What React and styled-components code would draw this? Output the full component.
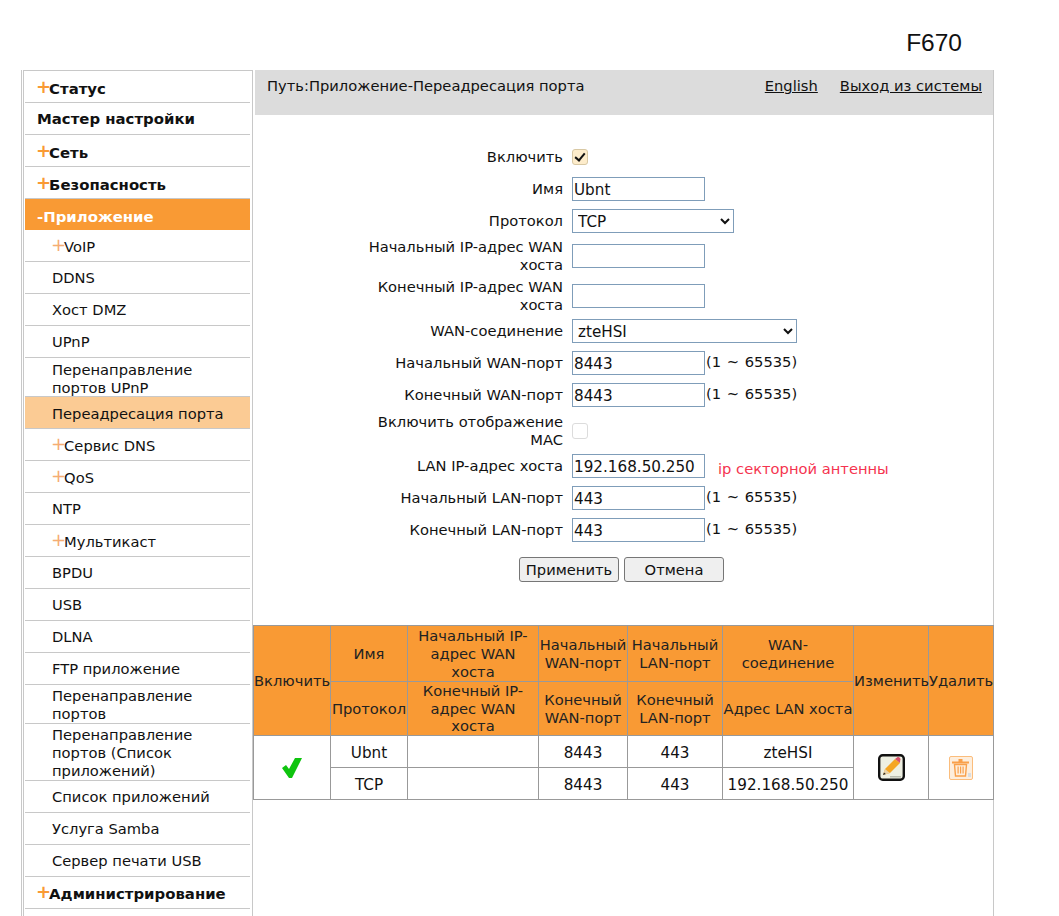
import styled, { createGlobalStyle } from 'styled-components';

const Global = createGlobalStyle`
	html, body {
		margin: 0;
		padding: 0;
		background: #fff;
	}
	body {
		font-family: 'DejaVu Sans', Verdana, sans-serif;
		font-size: 14.7px;
		line-height: 18px;
		color: #111;
	}
`;

const Page = styled.div`
	display: flex;
	flex-direction: column;
	height: 916px;
	overflow: hidden;
`;

const Header = styled.div`
	flex: none;
	height: 70px;
	width: 962px;
	box-sizing: border-box;
	padding-top: 29px;
	text-align: right;
	font-family: 'Liberation Sans', Arial, sans-serif;
	font-size: 24.5px;
	line-height: 28px;
`;

const Frame = styled.div`
	flex: 1;
	display: flex;
	width: 971px;
	margin-left: 21px;
	border-left: 1px solid #c8c8c8;
	border-right: 1px solid #c8c8c8;
`;

const Sidebar = styled.div`
	flex: none;
	width: 225px;
	margin-left: 1px;
	padding: 0 2px 0 1px;
	border: 1px solid #c8c8c8;
	border-bottom: none;
`;

const navTop = p => {
	if (p.$top) return p.$top;
	if (p.$main) return p.$plus || p.$active ? 9 : 7;
	return p.$plus || p.$current ? 8 : 7;
};

const NavItem = styled.div`
	box-sizing: border-box;
	height: ${p => (p.$height ? p.$height : p.$active ? 31 : 32)}px;
	padding: ${navTop}px 0 0 ${p => (p.$sub ? '27px' : '12px')};
	border-bottom: ${p => (p.$active ? 'none' : '1px solid #c8c8c8')};
	font-weight: ${p => (p.$main ? 700 : 400)};
	font-size: ${p => (p.$main ? '14.9px' : 'inherit')};
	background: ${p => (p.$active ? '#f99a34' : p.$current ? '#fbcb94' : 'transparent')};
	color: ${p => (p.$active ? '#fff' : '#111')};
`;

const Plus = styled.span`
	display: inline-block;
	margin: 0 -2px 0 -1px;
	font-size: 18px;
	line-height: 0;
	vertical-align: 1px;
	color: ${p => (p.$sub ? '#f5ad73' : '#f99a34')};
	font-weight: ${p => (p.$sub ? 400 : 700)};
`;

const Main = styled.div`
	flex: 1;
	min-width: 0;
`;

const PathBar = styled.div`
	display: flex;
	justify-content: space-between;
	height: 45px;
	box-sizing: border-box;
	margin-left: 2px;
	padding: 7px 11px 0 12px;
	background: #dcdcdc;
`;

const Links = styled.div`
	display: flex;
	gap: 22px;
`;

const TopLink = styled.a`
	color: #111;
	text-decoration: underline;
`;

const Form = styled.div`
	display: flex;
	flex-direction: column;
	padding: 30px 0 43px;
`;

const Row = styled.div`
	display: flex;
	align-items: center;
	min-height: 24px;
	margin-top: ${p => p.$gap ?? 8}px;
`;

const Label = styled.div`
	flex: none;
	box-sizing: border-box;
	width: 310px;
	padding-left: 100px;
	text-align: right;
`;

const Control = styled.div`
	display: flex;
	align-items: center;
	margin-left: 9px;
`;

const TextInput = styled.input`
	box-sizing: border-box;
	width: 133px;
	height: 24px;
	padding: 2px 1px 0;
	border: 1px solid #7f9db9;
	border-radius: 0;
	background: #fff;
	color: #111;
	font: inherit;
	font-size: 15.2px;
	outline: none;
`;

const Select = styled.select`
	box-sizing: border-box;
	width: ${p => p.$width}px;
	height: 24px;
	padding: 2px 0 0 1px;
	border: 1px solid #7f9db9;
	border-radius: 0;
	background: #fff;
	color: #111;
	font: inherit;
	font-size: 15.2px;
`;

const Check = styled.input`
	appearance: none;
	position: relative;
	width: 16px;
	height: 16px;
	margin: 0;
	border: 1px solid ${p => (p.checked ? '#d8c8a4' : '#dcdcdc')};
	border-radius: 3px;
	background: ${p => (p.checked ? '#fdeccb' : '#fff')};

	&:checked::after {
		content: '';
		position: absolute;
		left: 4px;
		top: 1px;
		width: 4px;
		height: 8px;
		border: solid #111;
		border-width: 0 2px 2px 0;
		transform: rotate(40deg);
	}
`;

const Range = styled.span`
	margin-left: 1px;
	margin-top: -3px;
	word-spacing: 1px;
`;

const Note = styled.span`
	margin-left: 13px;
	margin-top: 7px;
	color: #f5344f;
`;

const Buttons = styled.div`
	display: flex;
	justify-content: center;
	gap: 5px;
	margin-top: 15px;
	margin-left: 266px;
	width: 205px;
`;

const Button = styled.button`
	box-sizing: border-box;
	width: 100px;
	height: 25px;
	padding: 0;
	border: 1px solid #767676;
	border-radius: 3px;
	background: #efefef;
	color: #111;
	font: inherit;
`;

const Table = styled.table`
	width: 740px;
	border-collapse: collapse;
	table-layout: fixed;
	text-align: center;
`;

const Th = styled.th`
	height: ${p => p.$height ?? 'auto'};
	padding: ${p => (p.$first ? 1 : 0)}px ${p => p.$pad ?? 0}px 0;
	border: 1px solid #999;
	background: #f99a34;
	font-weight: 400;
	line-height: ${p => (p.$first ? '18px' : '17.7px')};
	color: #222;
	white-space: ${p => (p.$nowrap ? 'nowrap' : 'normal')};
`;

const Td = styled.td`
	height: 29px;
	padding: 2px 0 0;
	border: 1px solid #999;
	background: #fff;
	font-size: 15.2px;
`;

const IconWrap = styled.div`
	display: flex;
	justify-content: center;
	align-items: center;
	margin-top: -2px;
`;

const items = [
	{ text: 'Статус', main: true, plus: true },
	{ text: 'Мастер настройки', main: true },
	{ text: 'Сеть', main: true, plus: true },
	{ text: 'Безопасность', main: true, plus: true },
	{ text: 'Приложение', main: true, active: true },
	{ text: 'VoIP', sub: true, plus: true },
	{ text: 'DDNS', sub: true },
	{ text: 'Хост DMZ', sub: true },
	{ text: 'UPnP', sub: true },
	{ text: 'Перенаправление портов UPnP', sub: true, top: 3, height: 39 },
	{ text: 'Переадресация порта', sub: true, current: true },
	{ text: 'Сервис DNS', sub: true, plus: true },
	{ text: 'QoS', sub: true, plus: true },
	{ text: 'NTP', sub: true },
	{ text: 'Мультикаст', sub: true, plus: true },
	{ text: 'BPDU', sub: true },
	{ text: 'USB', sub: true },
	{ text: 'DLNA', sub: true },
	{ text: 'FTP приложение', sub: true },
	{ text: 'Перенаправление портов', sub: true, top: 2, height: 39 },
	{ text: 'Перенаправление портов (Список приложений)', sub: true, top: 2, height: 57 },
	{ text: 'Список приложений', sub: true },
	{ text: 'Услуга Samba', sub: true },
	{ text: 'Сервер печати USB', sub: true },
	{ text: 'Администрирование', main: true, plus: true, top: 8 },
];

const GreenCheck = () => (
	<svg width="20" height="21" viewBox="0 0 20 21">
		<path d="M0 11l4-3 3 4L13 1h7L10 21H7z" fill="#0fc40f" />
	</svg>
);

const EditIcon = () => (
	<svg width="27" height="27" viewBox="0 0 27 27">
		<rect x="1.2" y="1.2" width="24.600" height="24.600" rx="3.500" fill="#eef0e2" stroke="#111" strokeWidth="2.400" />
		<path d="M5 21l2-6L17 5l5 4-10 10z" fill="#f5a623" />
		<path d="M17 5l2-1.600c1-.6 2-.4 2.800.4s1 1.800.4 2.600L22 9z" fill="#d8506a" />
		<path d="M5 21l2-6 5 4z" fill="#e9d3a8" />
		<path d="M5 21l1-2.600 1.800 1.500z" fill="#222" />
		<path d="M12 22h11v1.500H12z" fill="#b9bcae" />
	</svg>
);

const TrashIcon = () => (
	<svg width="24" height="24" viewBox="0 0 24 24">
		<rect x="0.5" y="0.5" width="23" height="23" rx="1.500" fill="#fdeedd" stroke="#fbbd7c" />
		<path d="M3 5.500h17v2H3zM9.500 3h4v2.500h-4z" fill="#f9a04a" />
		<path d="M5.500 8.500h12l-1 11.500h-10z" fill="#fdeedd" stroke="#f9a04a" strokeWidth="1.400" />
		<path d="M8.500 10.500h1.200v7H8.500zM11 10.500h1.200v7H11zM13.500 10.500h1.200v7h-1.200z" fill="#f9a04a" />
		<path d="M19 17h3v4h-3z" fill="#d9dde0" />
	</svg>
);

const FormRow = ({ label, gap, children }) => (
	<Row $gap={gap}>
		<Label>{label}</Label>
		<Control>{children}</Control>
	</Row>
);

export default function App() {
	return (
		<Page>
			<Global />
			<Header>F670</Header>
			<Frame>
				<Sidebar>
					{items.map(item => (
						<NavItem
							key={item.text}
							$main={item.main}
							$sub={item.sub}
							$plus={item.plus}
							$active={item.active}
							$current={item.current}
							$top={item.top}
							$height={item.height}
						>
							{item.plus && <Plus $sub={item.sub}>+</Plus>}
							{item.active && '-'}
							{item.text}
						</NavItem>
					))}
				</Sidebar>
				<Main>
					<PathBar>
						<span>Путь:Приложение-Переадресация порта</span>
						<Links>
							<TopLink>English</TopLink>
							<TopLink>Выход из системы</TopLink>
						</Links>
					</PathBar>
					<Form>
						<FormRow label="Включить" gap={0}>
							<Check type="checkbox" checked readOnly />
						</FormRow>
						<FormRow label="Имя">
							<TextInput defaultValue="Ubnt" />
						</FormRow>
						<FormRow label="Протокол">
							<Select $width={162} defaultValue="TCP">
								<option>TCP</option>
							</Select>
						</FormRow>
						<FormRow label="Начальный IP-адрес WAN хоста" gap={5}>
							<TextInput />
						</FormRow>
						<FormRow label="Конечный IP-адрес WAN хоста" gap={4}>
							<TextInput />
						</FormRow>
						<FormRow label="WAN-соединение" gap={5}>
							<Select $width={225} defaultValue="zteHSI">
								<option>zteHSI</option>
							</Select>
						</FormRow>
						<FormRow label="Начальный WAN-порт">
							<TextInput defaultValue="8443" />
							<Range>(1 ~ 65535)</Range>
						</FormRow>
						<FormRow label="Конечный WAN-порт">
							<TextInput defaultValue="8443" />
							<Range>(1 ~ 65535)</Range>
						</FormRow>
						<FormRow label="Включить отображение MAC" gap={6}>
							<Check type="checkbox" />
						</FormRow>
						<FormRow label="LAN IP-адрес хоста" gap={4}>
							<TextInput defaultValue="192.168.50.250" />
							<Note>ip секторной антенны</Note>
						</FormRow>
						<FormRow label="Начальный LAN-порт">
							<TextInput defaultValue="443" />
							<Range>(1 ~ 65535)</Range>
						</FormRow>
						<FormRow label="Конечный LAN-порт">
							<TextInput defaultValue="443" />
							<Range>(1 ~ 65535)</Range>
						</FormRow>
						<Buttons>
							<Button>Применить</Button>
							<Button>Отмена</Button>
						</Buttons>
					</Form>
					<Table>
						<colgroup>
							<col width="77" />
							<col width="77" />
							<col width="131" />
							<col width="89" />
							<col width="95" />
							<col width="131" />
							<col width="75" />
							<col width="65" />
						</colgroup>
						<thead>
							<tr>
								<Th rowSpan={2} $nowrap>Включить</Th>
								<Th $first $height="54px">Имя</Th>
								<Th $first $pad={8}>Начальный IP-адрес WAN хоста</Th>
								<Th $first>Начальный WAN-порт</Th>
								<Th $first>Начальный LAN-порт</Th>
								<Th $first $pad={10}>WAN-соединение</Th>
								<Th rowSpan={2} $nowrap>Изменить</Th>
								<Th rowSpan={2} $nowrap>Удалить</Th>
							</tr>
							<tr>
								<Th $height="53px" $nowrap>Протокол</Th>
								<Th $pad={8}>Конечный IP-адрес WAN хоста</Th>
								<Th>Конечный WAN-порт</Th>
								<Th>Конечный LAN-порт</Th>
								<Th $nowrap>Адрес LAN хоста</Th>
							</tr>
						</thead>
						<tbody>
							<tr>
								<Td rowSpan={2}><IconWrap><GreenCheck /></IconWrap></Td>
								<Td>Ubnt</Td>
								<Td />
								<Td>8443</Td>
								<Td>443</Td>
								<Td>zteHSI</Td>
								<Td rowSpan={2}><IconWrap><EditIcon /></IconWrap></Td>
								<Td rowSpan={2}><IconWrap><TrashIcon /></IconWrap></Td>
							</tr>
							<tr>
								<Td>TCP</Td>
								<Td />
								<Td>8443</Td>
								<Td>443</Td>
								<Td>192.168.50.250</Td>
							</tr>
						</tbody>
					</Table>
				</Main>
			</Frame>
		</Page>
	);
}
